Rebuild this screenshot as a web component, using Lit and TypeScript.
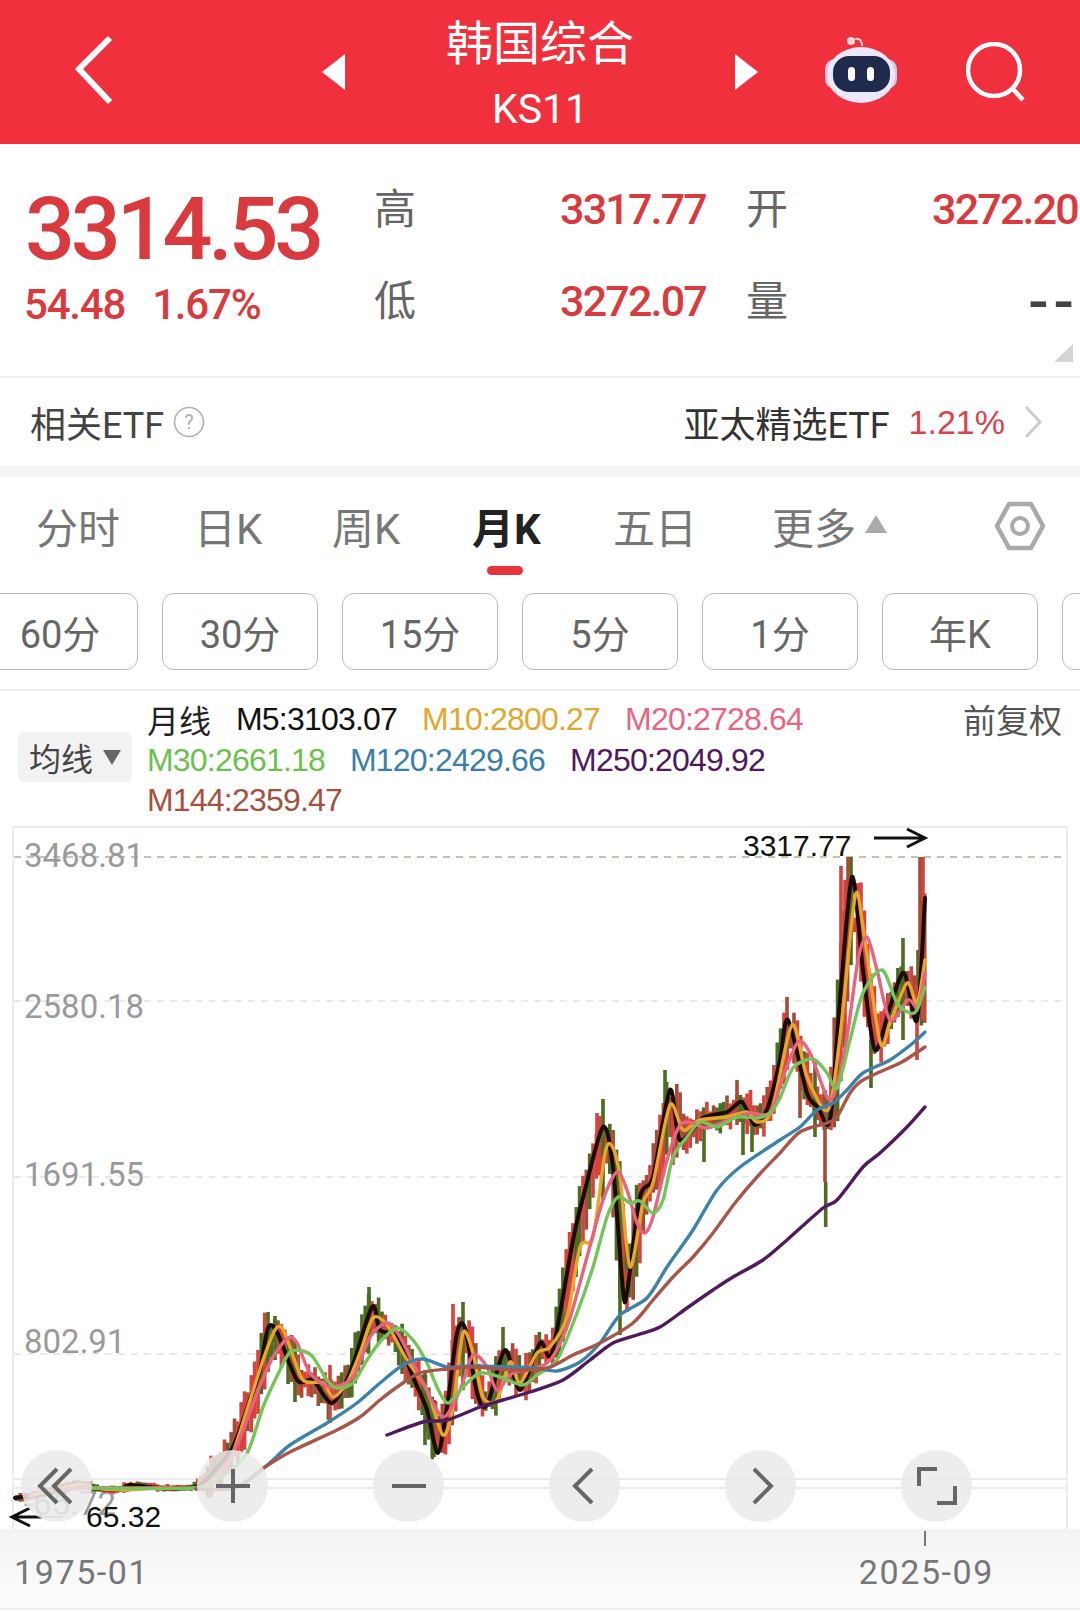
import { LitElement, html, css, svg } from 'lit'
import { customElement } from 'lit/decorators.js'

type Pt = number[]

const M5: Pt[] = [[15,1498],[40,1494],[79,1483],[93,1488],[120,1490],[129,1485],[160,1488],[196,1487],[215,1470],[233,1447],[250,1400],[260,1370],[268,1328],[277,1332],[297,1380],[313,1380],[332,1403],[350,1373],[372,1307],[380,1330],[397,1337],[413,1377],[427,1410],[438,1453],[448,1400],[457,1333],[465,1328],[477,1393],[487,1405],[505,1350],[520,1390],[540,1343],[552,1353],[573,1240],[585,1190],[603,1127],[613,1167],[623,1290],[627,1292],[640,1197],[653,1177],[670,1090],[680,1140],[703,1118],[727,1112],[742,1102],[755,1125],[768,1107],[780,1060],[788,1020],[807,1093],[818,1107],[830,1120],[840,1000],[852,877],[863,970],[875,1050],[890,1007],[904,973],[917,1020],[925,898]]
const M10: Pt[] = [[30,1496],[79,1484],[93,1488],[120,1490],[160,1488],[196,1488],[213,1480],[230,1460],[247,1410],[263,1360],[275,1330],[282,1328],[290,1347],[303,1380],[323,1383],[333,1397],[347,1383],[360,1353],[373,1318],[387,1325],[407,1360],[427,1390],[443,1435],[453,1407],[463,1333],[473,1353],[483,1397],[497,1400],[510,1362],[520,1383],[537,1353],[550,1347],[567,1317],[580,1247],[593,1237],[605,1153],[612,1146],[620,1177],[630,1267],[643,1203],[653,1183],[670,1105],[683,1130],[700,1120],[727,1117],[747,1112],[757,1122],[772,1110],[792,1025],[807,1077],[828,1110],[840,1037],[855,897],[863,927],[880,1042],[890,1023],[907,983],[917,1003],[925,960]]
const M20: Pt[] = [[50,1490],[93,1488],[160,1488],[196,1488],[215,1482],[235,1450],[257,1393],[273,1357],[288,1338],[297,1343],[310,1373],[330,1387],[353,1377],[370,1337],[387,1323],[400,1337],[423,1383],[443,1417],[460,1390],[473,1355],[487,1367],[497,1390],[513,1373],[547,1363],[567,1327],[587,1257],[603,1200],[617,1172],[627,1190],[637,1223],[645,1233],[653,1217],[667,1160],[680,1125],[693,1123],[707,1128],[733,1118],[750,1113],[770,1113],[783,1077],[798,1042],[810,1053],[827,1097],[835,1092],[847,1037],[858,960],[867,937],[877,970],[890,1020],[908,1000],[918,1007],[925,973]]
const M30: Pt[] = [[92,1488],[195,1488],[220,1478],[247,1453],[263,1407],[280,1370],[290,1352],[303,1351],[313,1357],[327,1380],[337,1388],[353,1383],[367,1360],[380,1342],[397,1328],[413,1340],[427,1363],[437,1387],[448,1403],[463,1387],[480,1373],[500,1377],[523,1385],[537,1375],[557,1360],[577,1313],[593,1267],[607,1217],[618,1197],[630,1203],[640,1201],[653,1213],[663,1200],[673,1157],[687,1137],[700,1122],[717,1127],[737,1117],[757,1118],[770,1113],[780,1098],[793,1068],[813,1059],[827,1073],[837,1088],[850,1040],[863,993],[882,970],[897,1003],[910,1013],[917,1010],[925,987]]
const M120: Pt[] = [[196,1489],[235,1488],[265,1467],[290,1445],[327,1423],[357,1403],[380,1383],[403,1365],[423,1359],[447,1367],[470,1366],[513,1367],[537,1368],[557,1371],[580,1362],[600,1343],[620,1315],[647,1298],[667,1267],[693,1230],[717,1190],[740,1167],[780,1140],[800,1127],[817,1110],[833,1103],[847,1090],[863,1073],[890,1060],[913,1043],[925,1032]]
const M144: Pt[] = [[196,1489],[235,1488],[265,1467],[290,1452],[337,1430],[360,1417],[380,1400],[400,1385],[420,1373],[447,1369],[473,1367],[513,1370],[547,1368],[573,1355],[600,1343],[633,1323],[653,1300],[673,1277],[693,1257],[713,1233],[735,1203],[757,1177],[780,1153],[800,1132],[827,1123],[837,1117],[850,1093],[863,1080],[900,1063],[913,1055],[925,1047]]
const M250: Pt[] = [[387,1435],[423,1422],[447,1420],[480,1407],[503,1400],[530,1392],[563,1380],[590,1360],[613,1343],[637,1335],[660,1327],[687,1308],[713,1290],[733,1277],[763,1260],[787,1240],[823,1208],[837,1200],[863,1167],[880,1153],[907,1127],[925,1107]]

const RED = '#d8423c'
const GRN = '#4c6c22'
const BRN = '#a34d38'

// [x, top, bottom, colour] - the wicks that stick out of the band
const SPIKES: [number, number, number, string][] = [
  [825, 1090, 1182, BRN], [825.7, 1182, 1227, GRN], [737, 1080, 1125, BRN], [743, 1100, 1155, GRN],
  [752, 1120, 1152, GRN], [704, 1125, 1162, GRN], [787, 997, 1050, BRN], [800, 1060, 1118, BRN],
  [815, 1060, 1137, GRN], [841, 866, 1000, RED], [845, 880, 1040, RED], [851, 857, 935, GRN],
  [848, 857, 950, BRN], [871, 1040, 1088, GRN], [903, 938, 1040, GRN], [917, 985, 1060, RED],
  [923, 857, 1020, RED], [920, 857, 1000, BRN], [603, 1099, 1200, GRN], [597, 1113, 1175, RED],
  [620, 1187, 1335, GRN], [627, 1270, 1312, RED], [673, 1105, 1165, RED], [665, 1070, 1130, GRN],
  [576, 1223, 1277, GRN], [503, 1327, 1385, GRN], [268, 1312, 1370, GRN], [275, 1316, 1360, GRN],
  [295, 1340, 1402, GRN], [330, 1365, 1423, RED], [369, 1287, 1340, GRN], [463, 1302, 1390, GRN],
  [453, 1304, 1380, RED], [425, 1370, 1445, GRN], [434, 1400, 1457, GRN], [437, 1420, 1452, RED],
]

const smooth = (p: Pt[]) => {
  let d = `M${p[0][0]} ${p[0][1]}`
  for (let i = 0; i < p.length - 1; i++) {
    const a = p[Math.max(i - 1, 0)], b = p[i], c = p[i + 1], e = p[Math.min(i + 2, p.length - 1)]
    const k = 0.14
    d += `C${(b[0] + (c[0] - a[0]) * k).toFixed(1)} ${(b[1] + (c[1] - a[1]) * k).toFixed(1)} ${(c[0] - (e[0] - b[0]) * k).toFixed(1)} ${(c[1] - (e[1] - b[1]) * k).toFixed(1)} ${c[0]} ${c[1]}`
  }
  return d
}

const yAt = (x: number) => {
  for (let i = 0; i < M5.length - 1; i++) {
    if (x <= M5[i + 1][0]) {
      const t = (x - M5[i][0]) / (M5[i + 1][0] - M5[i][0])
      return M5[i][1] + (M5[i + 1][1] - M5[i][1]) * t
    }
  }
  return M5[M5.length - 1][1]
}

const candles = () => {
  let seed = 41
  const rnd = () => (seed = (seed * 16807) % 2147483647) / 2147483647
  const out = []
  for (let x = 15; x < 925; x += 3.35) {
    const a = yAt(Math.max(x - 5, 15)), b = yAt(Math.min(x + 5, 925))
    const big = x > 205
    const top = Math.max(857, Math.min(a, b) - (big ? 3 + rnd() * 13 : 2 + rnd() * 2))
    const bot = Math.max(a, b) + (big ? 3 + rnd() * 15 : 2 + rnd() * 2)
    const r = rnd()
    const col = r < 0.45 ? RED : r < 0.75 ? GRN : BRN
    out.push(svg`<rect x=${x.toFixed(1)} y=${top.toFixed(1)} width="3.6" height=${(bot - top).toFixed(1)} fill=${col} />`)
  }
  return out
}

const LEGEND = [
  [['M5:3103.07', '#111'], ['M10:2800.27', '#e2a72e'], ['M20:2728.64', '#e8667f']],
  [['M30:2661.18', '#6cc04e'], ['M120:2429.66', '#3a7fa8'], ['M250:2049.92', '#4e1a5c']],
  [['M144:2359.47', '#a8503f']],
]

@customElement('app-root')
export class AppRoot extends LitElement {
  static styles = css`
    :host {
      display: block;
      width: 1080px;
      height: 1612px;
      overflow: hidden;
      background: #fff;
      font-family: Roboto, "Noto Sans CJK SC", sans-serif;
      color: #666;
    }
    svg { display: block; }

    .header {
      position: relative;
      height: 144px;
      background: #f0303c;
      color: #fff;
      display: grid;
      grid-template-columns: 322px 23px 1fr 23px 67px 72px 69px 59px 55px;
      align-items: center;
    }
    .back { position: absolute; left: 74px; top: 34px; }
    .title { text-align: center; line-height: 1; }
    .title-cn { font-size: 47px; height: 56px; padding-top: 4px; line-height: 56px; }
    .title-code { font-size: 41px; line-height: 46px; padding-top: 14px; }
    .robot { grid-column: 6; margin-top: -6px; }
    .search { grid-column: 8; }

    .quote {
      position: relative;
      height: 234px;
      box-sizing: border-box;
      border-bottom: 2px solid #f2f2f2;
      display: flex;
      color: #d93a3e;
    }
    .main { width: 375px; padding: 41px 0 0 25px; box-sizing: border-box; }
    .price { font-size: 88px; line-height: 88px; font-weight: 500; letter-spacing: -4.2px; }
    .change { display: flex; gap: 27px; font-size: 42px; line-height: 50px; margin-top: 7px; margin-left: -1px; letter-spacing: -1.2px; font-weight: 500; }
    .stats {
      display: grid;
      grid-template-columns: 186px 186px 186px 147px;
      grid-auto-rows: 92px;
      padding-top: 17px;
      align-items: center;
      margin-left: -1px;
    }
    .stat-label { font-size: 42px; color: #666; margin-top: -3px; }
    .stat-value { font-size: 43px; letter-spacing: -1.8px; white-space: nowrap; font-weight: 500; padding-top: 4px; }
    .stat-none { color: #444; text-align: right; padding-right: 0; font-size: 60px; letter-spacing: 5px; }
    .corner { position: absolute; right: 7px; bottom: 14px; }

    .etf {
      height: 88px;
      display: flex;
      align-items: center;
      padding: 0 38px 0 30px;
      font-size: 36px;
      color: #444;
      border-bottom: 11px solid #f5f5f5;
    }
    .etf-help { margin-left: 9px; }
    .etf-name { margin-left: auto; color: #333; }
    .etf-pct { margin-left: 19px; font-size: 34px; color: #d9434f; font-family: "Liberation Sans", sans-serif; }
    .etf-arrow { margin-left: 19px; }

    .tabs {
      position: relative;
      height: 116px;
      display: grid;
      grid-template-columns: 158px 138px 140px 141px 159px auto;
      padding-left: 36px;
      align-items: center;
      font-size: 42px;
      color: #777;
      box-sizing: border-box;
      padding-bottom: 19px;
    }
    .tab { position: relative; display: flex; align-items: center; }
    .tab-on { color: #222; font-weight: 700; }
    .tab-on::after {
      content: "";
      position: absolute;
      left: 15px;
      top: 71px;
      width: 36px;
      height: 9px;
      border-radius: 5px;
      background: #e5343c;
    }
    .tab-caret { margin-left: 9px; margin-top: -4px; }
    .gear { position: absolute; left: 994px; top: 24px; }

    .chips {
      display: flex;
      gap: 24px;
      margin-left: -18px;
      width: 1200px;
      padding-bottom: 19px;
      border-bottom: 2px solid #f0f0f0;
    }
    .chip {
      flex: none;
      width: 156px;
      height: 77px;
      box-sizing: border-box;
      border: 1px solid #b9b9b9;
      border-radius: 12px;
      display: flex;
      align-items: center;
      justify-content: center;
      font-size: 38px;
      color: #666;
    }

    .legend-row {
      height: 135px;
      box-sizing: border-box;
      display: flex;
      padding: 8px 18px 0;
    }
    .ma-btn {
      flex: none;
      width: 114px;
      height: 50px;
      margin-top: 33px;
      padding-left: 11px;
      box-sizing: border-box;
      display: flex;
      align-items: center;
      gap: 10px;
      background: #f2f2f2;
      border-radius: 6px;
      font-size: 32px;
      color: #444;
    }
    .legend { margin-left: 15px; flex: 1; font-family: "Liberation Sans", "Noto Sans CJK SC", sans-serif; }
    .legend-line { display: flex; gap: 25px; height: 40.6px; line-height: 40.6px; font-size: 32px; letter-spacing: -0.8px; white-space: nowrap; }
    .legend-name { font-size: 32px; letter-spacing: 0; color: #222; font-family: "Noto Sans CJK SC", sans-serif; }
    .legend-adj { margin-left: auto; font-size: 33px; letter-spacing: 0; color: #555; font-family: "Noto Sans CJK SC", sans-serif; }

    .chart { position: relative; height: 703px; }
    .axis { font-family: Roboto, sans-serif; font-size: 33px; fill: #9a9a9a; }
    .mark { font-family: "Liberation Sans", sans-serif; font-size: 30px; fill: #111; }

    .controls {
      position: absolute;
      left: 21px;
      top: 624px;
      width: 951px;
      display: flex;
      justify-content: space-between;
    }
    .control {
      width: 71px;
      height: 72px;
      border-radius: 50%;
      background: rgba(234, 234, 234, 0.85);
      display: flex;
      align-items: center;
      justify-content: center;
    }

    .dates {
      height: 81px;
      box-sizing: border-box;
      display: flex;
      justify-content: space-between;
      padding: 23px 86px 0 14px;
      font-size: 34px;
      line-height: 40px;
      letter-spacing: 1.6px;
      color: #777;
      background: linear-gradient(#f3f3f3, #fafafa 70%, #fdfdfd);
      border-bottom: 2px solid #eee;
    }
    .date-end { position: relative; }
    .date-end::before {
      content: "";
      position: absolute;
      left: 65px;
      top: -21px;
      width: 2px;
      height: 15px;
      background: #777;
    }
  `

  private chart() {
    const line = (p: Pt[], c: string, w = 3.4) =>
      svg`<path d=${smooth(p)} fill="none" stroke=${c} stroke-width=${w} stroke-linejoin="round" stroke-linecap="round" />`
    return html`<svg width="1080" height="703" viewBox="0 826 1080 703">
      <rect x="13" y="827" width="1054" height="703" fill="#fff" stroke="#ececec" stroke-width="2" />
      <g stroke-width="1.5" stroke-dasharray="7 6">
        <line x1="14" x2="1066" y1="857" y2="857" stroke="#b5b08f" />
        <line x1="14" x2="1066" y1="1001" y2="1001" stroke="#e4e4e4" />
        <line x1="14" x2="1066" y1="1177" y2="1177" stroke="#e4e4e4" />
        <line x1="14" x2="1066" y1="1354" y2="1354" stroke="#e4e4e4" />
      </g>
      <line x1="14" x2="1066" y1="1479" y2="1479" stroke="#e6e6e6" stroke-width="1.5" />
      <line x1="14" x2="1066" y1="1488" y2="1488" stroke="#e6e6e6" stroke-width="1.5" />
      <text class="axis" x="24" y="867">3468.81</text>
      <text class="axis" x="24" y="1018">2580.18</text>
      <text class="axis" x="24" y="1186">1691.55</text>
      <text class="axis" x="24" y="1353">802.91</text>
      <text class="axis" x="24" y="1515">-65.72</text>
      <line x1="24" x2="64" y1="1517" y2="1517" stroke="#aaa" stroke-width="2" />
      ${candles()}
      ${SPIKES.map(s => svg`<rect x=${s[0] - 1.8} y=${s[1]} width="3.6" height=${s[2] - s[1]} fill=${s[3]} />`)}
      ${line(M5, '#1a0a08', 4)}
      ${line(M10, '#e8a62a')}
      ${line(M20, '#e8637d')}
      ${line(M30, '#74c45a')}
      ${line(M120, '#3d82a8')}
      ${line(M144, '#a9564a')}
      ${line(M250, '#4f1a5e')}
      <text class="mark" x="743" y="856">3317.77</text>
      <path d="M874 838H924M907 829l18 9-18 9" fill="none" stroke="#111" stroke-width="3" />
      <text class="mark" x="86" y="1527">65.32</text>
      <path d="M13 1517H42M30 1508l-18 9 18 9" fill="none" stroke="#111" stroke-width="3" />
    </svg>`
  }

  private controls() {
    const icon = (d: string) => html`<div class="control">
      <svg width="44" height="44" viewBox="0 0 44 44"><path d=${d} fill="none" stroke="#666" stroke-width="4" /></svg>
    </div>`
    return html`<div class="controls">
      ${icon('M22 5 5 22l17 17M36 5 19 22l17 17')}
      ${icon('M22 5V39M5 22H39')}
      ${icon('M5 22H39')}
      ${icon('M29 5 12 22l17 17')}
      ${icon('M15 5l17 17-17 17')}
      ${icon('M4 22V5H22M40 22V39H22')}
    </div>`
  }

  render() {
    return html`
      <div class="header">
        <svg class="back" width="44" height="72" viewBox="0 0 44 72"><path d="M36 4 5 35l31 33" fill="none" stroke="#fff" stroke-width="6" /></svg>
        <span></span>
        <svg width="23" height="36" viewBox="0 0 23 36"><path d="M23 0V36L0 18Z" fill="#fff" /></svg>
        <div class="title">
          <div class="title-cn">韩国综合</div>
          <div class="title-code">KS11</div>
        </div>
        <svg width="23" height="36" viewBox="0 0 23 36"><path d="M0 0V36L23 18Z" fill="#fff" /></svg>
        <svg class="robot" width="72" height="68" viewBox="0 0 72 68">
          <circle cx="26" cy="6" r="4" fill="#f7d9dc" />
          <path d="M30 4c4-1 7 1 7 7" fill="none" stroke="#f7d9dc" stroke-width="2" />
          <rect x="0" y="24" width="72" height="30" rx="10" fill="#cfc9f0" />
          <ellipse cx="36" cy="40" rx="34" ry="28" fill="#ebe8fb" />
          <rect x="8" y="21" width="57" height="36" rx="16" fill="#1f2a4d" />
          <rect x="23" y="32" width="7" height="14" rx="3.5" fill="#fff" />
          <rect x="42" y="32" width="7" height="14" rx="3.5" fill="#fff" />
        </svg>
        <svg class="search" width="59" height="60" viewBox="0 0 59 60">
          <circle cx="28" cy="28" r="26" fill="none" stroke="#fff" stroke-width="4.5" />
          <path d="M46 46 57 58" fill="none" stroke="#fff" stroke-width="4.5" />
        </svg>
      </div>

      <div class="quote">
        <div class="main">
          <div class="price">3314.53</div>
          <div class="change"><span>54.48</span><span>1.67%</span></div>
        </div>
        <div class="stats">
          <span class="stat-label">高</span><span class="stat-value">3317.77</span>
          <span class="stat-label">开</span><span class="stat-value">3272.20</span>
          <span class="stat-label">低</span><span class="stat-value">3272.07</span>
          <span class="stat-label">量</span><span class="stat-value stat-none">--</span>
        </div>
        <svg class="corner" width="19" height="18" viewBox="0 0 19 18"><path d="M19 0V18H0Z" fill="#d4d4d4" /></svg>
      </div>

      <div class="etf">
        <span>相关ETF</span>
        <svg class="etf-help" width="32" height="32" viewBox="0 0 32 32">
          <circle cx="16" cy="16" r="14.5" fill="none" stroke="#b0b0b0" stroke-width="1.6" />
          <text x="16" y="23" text-anchor="middle" font-size="20" fill="#b0b0b0">?</text>
        </svg>
        <span class="etf-name">亚太精选ETF</span>
        <span class="etf-pct">1.21%</span>
        <svg class="etf-arrow" width="18" height="32" viewBox="0 0 18 32"><path d="M2 1 16 16 2 31" fill="none" stroke="#ccc" stroke-width="3" /></svg>
      </div>

      <div class="tabs">
        <div class="tab">分时</div>
        <div class="tab">日K</div>
        <div class="tab">周K</div>
        <div class="tab tab-on">月K</div>
        <div class="tab">五日</div>
        <div class="tab">更多
          <svg class="tab-caret" width="22" height="18" viewBox="0 0 22 18"><path d="M11 0 22 18H0Z" fill="#aaa" /></svg>
        </div>
        <svg class="gear" width="52" height="50" viewBox="0 0 52 50">
          <path d="M15 3H37L49 25 37 47H15L3 25Z" fill="none" stroke="#aaa" stroke-width="4.5" stroke-linejoin="round" />
          <circle cx="26" cy="25" r="8" fill="none" stroke="#aaa" stroke-width="4" />
        </svg>
      </div>

      <div class="chips">
        ${['60分', '30分', '15分', '5分', '1分', '年K', ''].map(c => html`<div class="chip">${c}</div>`)}
      </div>

      <div class="legend-row">
        <div class="ma-btn">均线
          <svg width="18" height="15" viewBox="0 0 18 15"><path d="M0 0H18L9 15Z" fill="#666" /></svg>
        </div>
        <div class="legend">
          ${LEGEND.map((row, i) => html`<div class="legend-line">
            ${i === 0 ? html`<span class="legend-name">月线</span>` : ''}
            ${row.map(m => html`<span style="color:${m[1]}">${m[0]}</span>`)}
            ${i === 0 ? html`<span class="legend-adj">前复权</span>` : ''}
          </div>`)}
        </div>
      </div>

      <div class="chart">
        ${this.chart()}
        ${this.controls()}
      </div>

      <div class="dates">
        <span>1975-01</span>
        <span class="date-end">2025-09</span>
      </div>
    `
  }
}
